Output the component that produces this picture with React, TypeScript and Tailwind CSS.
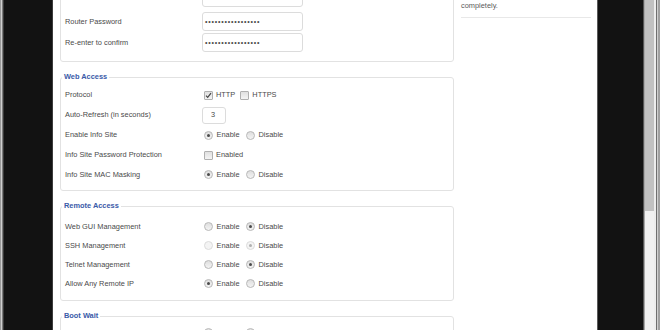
import React from "react";

function Radio({ checked, disabled }: { checked?: boolean; disabled?: boolean }) {
  return (
    <span
      className={
        disabled
          ? "w-[9px] h-[9px] rounded-full border border-[#dcdcdc] bg-[#f4f4f4] flex items-center justify-center"
          : "w-[9px] h-[9px] rounded-full border border-[#b8b8b8] bg-[linear-gradient(#dedede,#f4f4f4)] flex items-center justify-center"
      }
    >
      {checked && (
        <span
          className={
            disabled
              ? "w-[3px] h-[3px] rounded-full bg-[#b0b0b0]"
              : "w-[3px] h-[3px] rounded-full bg-[#4a4a4a]"
          }
        />
      )}
    </span>
  );
}

function Check({ checked }: { checked?: boolean }) {
  return (
    <span className="w-[9px] h-[9px] rounded-[1px] border border-[#b0b0b0] bg-[linear-gradient(#e0e0e0,#f4f4f4)] flex items-center justify-center">
      {checked && (
        <svg width="7" height="7" viewBox="0 0 7 7">
          <path d="M1 3.6 L2.7 5.4 L6 1.2" fill="none" stroke="#444" strokeWidth="1.2" />
        </svg>
      )}
    </span>
  );
}

function EnDis({ value, disabled }: { value: 0 | 1 | null; disabled?: boolean }) {
  return (
    <div className="flex items-center">
      <span className="ml-[2px]">
        <Radio checked={value === 0} disabled={disabled} />
      </span>
      <span className="ml-[3.5px]">Enable</span>
      <span className="ml-[6.5px]">
        <Radio checked={value === 1} disabled={disabled} />
      </span>
      <span className="ml-[3.5px]">Disable</span>
    </div>
  );
}

function Row({ label, h, children }: { label: string; h: string; children: React.ReactNode }) {
  return (
    <div className={"flex items-center pl-[4px] " + h}>
      <div className="w-[137px] shrink-0">{label}</div>
      <div className="flex items-center">{children}</div>
    </div>
  );
}

function Pwd() {
  return (
    <div className="w-[101px] h-[19px] border border-[#dcdcdc] rounded-[3px] bg-white flex items-center pl-[2px] overflow-hidden">
      <span className="text-[7px] tracking-[0.8px] text-[#4a4a4a] leading-none">•••••••••••••••••</span>
    </div>
  );
}

function Legend({ children }: { children: React.ReactNode }) {
  return (
    <legend className="ml-[1px] px-[2px] font-bold text-[#3a5aa8] leading-[10px]">{children}</legend>
  );
}

export default function App() {
  return (
    <div className="flex w-[660px] h-[330px] overflow-hidden bg-[#121212] font-['Liberation_Sans',Arial,sans-serif] text-[7.4px] leading-[10px] text-[#4a4a4a]">
      <div className="w-[1px] bg-[#9a9a9a]" />
      <div className="w-[1px] bg-[#cfcfcf]" />
      <div className="w-[1px] bg-[#7d7d7d]" />
      <div className="w-[1px] bg-[#3a3a3a]" />
      <div className="w-[48px]" />
      <div className="w-[1px] bg-[#3c3c3c]" />

      <main className="w-[544px] shrink-0 bg-white overflow-hidden">
        <div className="flex -mt-[30px] pl-[7px]">
          <div className="w-[394px] shrink-0">
            <fieldset className="border border-[#e2e2e2] rounded-[3px] pt-[16px] pb-[8px] mb-[10px]">
              <div className="mb-[3px]">
                <Row label="" h="h-[21px]">
                  <Pwd />
                </Row>
              </div>
              <Row label="Router Password" h="h-[21px]">
                <Pwd />
              </Row>
              <Row label="Re-enter to confirm" h="h-[21px]">
                <Pwd />
              </Row>
            </fieldset>

            <fieldset className="border border-[#e2e2e2] rounded-[3px] pt-[3px] pb-[6px] mb-[10px]">
              <Legend>Web Access</Legend>
              <Row label="Protocol" h="h-[20px]">
                <span className="ml-[2px]">
                  <Check checked />
                </span>
                <span className="ml-[3px]">HTTP</span>
                <span className="ml-[5px]">
                  <Check />
                </span>
                <span className="ml-[3px]">HTTPS</span>
              </Row>
              <Row label="Auto-Refresh (in seconds)" h="h-[20px]">
                <div className="w-[24px] h-[17px] border border-[#dcdcdc] rounded-[3px] flex items-center pl-[8px] text-[#444]">
                  3
                </div>
              </Row>
              <Row label="Enable Info Site" h="h-[20px]">
                <EnDis value={0} />
              </Row>
              <Row label="Info Site Password Protection" h="h-[20px]">
                <span className="ml-[2px]">
                  <Check />
                </span>
                <span className="ml-[3px]">Enabled</span>
              </Row>
              <Row label="Info Site MAC Masking" h="h-[19px]">
                <EnDis value={0} />
              </Row>
            </fieldset>

            <fieldset className="border border-[#e2e2e2] rounded-[3px] pt-[6px] pb-[7px] mb-[10px]">
              <Legend>Remote Access</Legend>
              <Row label="Web GUI Management" h="h-[19px]">
                <EnDis value={1} />
              </Row>
              <Row label="SSH Management" h="h-[19px]">
                <EnDis value={1} disabled />
              </Row>
              <Row label="Telnet Management" h="h-[19px]">
                <EnDis value={1} />
              </Row>
              <Row label="Allow Any Remote IP" h="h-[19px]">
                <EnDis value={0} />
              </Row>
            </fieldset>

            <fieldset className="border border-[#e2e2e2] rounded-[3px] pt-[2px] pb-[7px] mb-[10px]">
              <Legend>Boot Wait</Legend>
              <Row label="" h="h-[19px]">
                <EnDis value={null} />
              </Row>
            </fieldset>
          </div>

          <aside className="w-[130px] ml-[7px] pt-[11px] text-[#5a5a5a]">
            <p>
              This is a brief note explaining the
              <br />
              option: Disable turns the feature off
              <br />
              completely.
            </p>
            <div className="mt-[6px] h-[1px] bg-[#e8e8e8]" />
          </aside>
        </div>
      </main>

      <div className="w-[1px] bg-[#5a5a5a]" />
      <div className="w-[45px]" />
      <div className="w-[1px] bg-[#555555]" />
      <div className="w-[1px] bg-[#a8a8a8]" />
      <div className="w-[9px] flex flex-col bg-[#f0f0f0]">
        <div className="h-[211px] bg-[#c1c1c1]" />
      </div>
      <div className="w-[2px] bg-[#ececec]" />
      <div className="w-[1px] bg-[#6e6e6e]" />
      <div className="w-[1px] bg-[#cfcfcf]" />
      <div className="w-[2px] bg-[#a0a0a0]" />
    </div>
  );
}
